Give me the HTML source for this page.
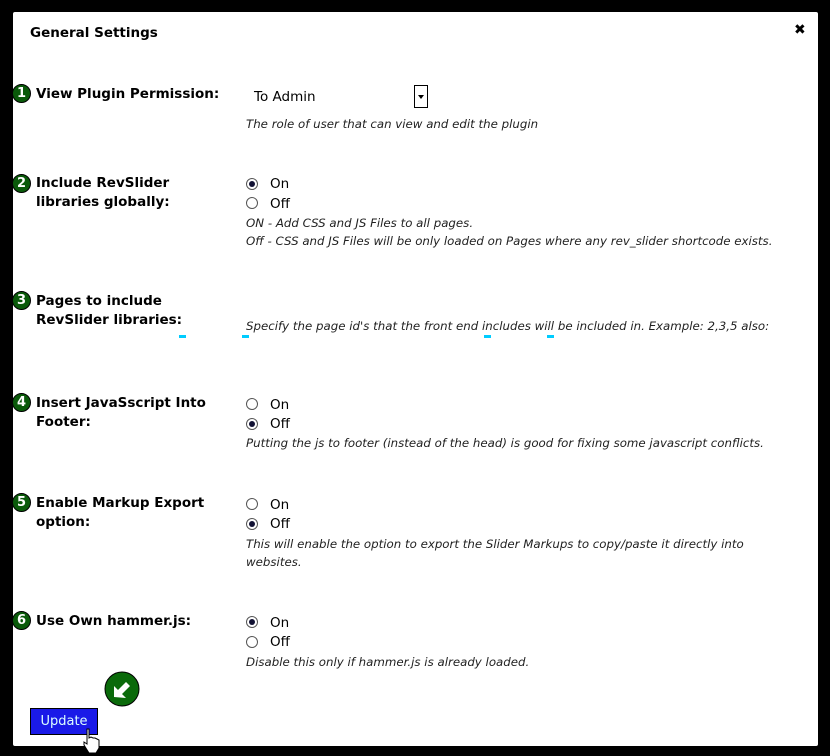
<!DOCTYPE html>
<html><head><style>
body{margin:0;width:830px;height:756px;background:#000;position:relative;overflow:hidden;font-family:"DejaVu Sans","Liberation Sans",sans-serif;}
.panel{position:absolute;left:13px;top:12px;width:805px;height:734px;background:#fff;border-radius:2px;}
.a{position:absolute;white-space:nowrap;}
.lbl{font-weight:bold;font-size:13.5px;color:#000;line-height:19px;}
.num{position:absolute;width:17px;height:17px;border-radius:50%;background:#0a5a0a;border:1px solid #000;color:#fff;font-weight:bold;font-size:13px;line-height:17px;text-align:center;}
.d{font-style:italic;font-size:11.8px;color:#222;line-height:18px;}
.r{font-size:13.5px;}
.rb{position:absolute;width:10px;height:10px;border:1px solid #555;border-radius:50%;background:#fff;}
.rb.on::after{content:"";position:absolute;left:2px;top:2px;width:6px;height:6px;border-radius:50%;background:#113;}
</style></head><body>
<div class="panel"></div>
<div class="a lbl" style="left:30px;top:24px;">General Settings</div>
<div class="a" style="left:794px;top:22px;font-weight:bold;font-size:14px;">✖</div>

<div class="num" style="left:12px;top:84px;">1</div>
<div class="a lbl" style="left:36px;top:85px;">View Plugin Permission:</div>
<div class="a r" style="left:254px;top:89px;">To Admin</div>
<div class="a" style="left:414px;top:85px;width:14px;height:23px;border:1px solid #000;box-sizing:border-box;"><div style="position:absolute;left:3px;top:9px;border:3px solid transparent;border-top:4px solid #000;"></div></div>
<div class="a d" style="left:246px;top:115px;">The role of user that can view and edit the plugin</div>

<div class="num" style="left:12px;top:174px;">2</div>
<div class="a lbl" style="left:36px;top:174px;">Include RevSlider<br>libraries globally:</div>
<div class="rb on" style="left:246px;top:178px;"></div><div class="a r" style="left:270px;top:176px;">On</div>
<div class="rb" style="left:246px;top:197px;"></div><div class="a r" style="left:270px;top:196px;">Off</div>
<div class="a d" style="left:246px;top:214px;">ON - Add CSS and JS Files to all pages.<br>Off - CSS and JS Files will be only loaded on Pages where any rev_slider shortcode exists.</div>

<div class="num" style="left:12px;top:291px;">3</div>
<div class="a lbl" style="left:36px;top:292px;">Pages to include<br>RevSlider libraries:</div>
<div class="a d" style="left:246px;top:317px;">Specify the page id's that the front end includes will be included in. Example: 2,3,5 also: </div>
<div class="a" style="left:179px;top:335px;width:7px;height:3px;background:#0cf;"></div>
<div class="a" style="left:242px;top:335px;width:7px;height:3px;background:#0cf;"></div>
<div class="a" style="left:484px;top:335px;width:7px;height:3px;background:#0cf;"></div>
<div class="a" style="left:547px;top:335px;width:7px;height:3px;background:#0cf;"></div>

<div class="num" style="left:12px;top:393px;">4</div>
<div class="a lbl" style="left:36px;top:394px;">Insert JavaSscript Into<br>Footer:</div>
<div class="rb" style="left:246px;top:398px;"></div><div class="a r" style="left:270px;top:397px;">On</div>
<div class="rb on" style="left:246px;top:418px;"></div><div class="a r" style="left:270px;top:416px;">Off</div>
<div class="a d" style="left:246px;top:434px;">Putting the js to footer (instead of the head) is good for fixing some javascript conflicts.</div>

<div class="num" style="left:12px;top:493px;">5</div>
<div class="a lbl" style="left:36px;top:494px;">Enable Markup Export<br>option:</div>
<div class="rb" style="left:246px;top:498px;"></div><div class="a r" style="left:270px;top:497px;">On</div>
<div class="rb on" style="left:246px;top:518px;"></div><div class="a r" style="left:270px;top:516px;">Off</div>
<div class="a d" style="left:246px;top:535px;">This will enable the option to export the Slider Markups to copy/paste it directly into<br>websites.</div>

<div class="num" style="left:12px;top:611px;">6</div>
<div class="a lbl" style="left:36px;top:612px;">Use Own hammer.js:</div>
<div class="rb on" style="left:246px;top:616px;"></div><div class="a r" style="left:270px;top:615px;">On</div>
<div class="rb" style="left:246px;top:636px;"></div><div class="a r" style="left:270px;top:634px;">Off</div>
<div class="a d" style="left:246px;top:653px;">Disable this only if hammer.js is already loaded.</div>

<svg class="a" style="left:104px;top:671px;" width="36" height="36" viewBox="0 0 36 36"><circle cx="18" cy="18" r="17" fill="#0a6a0a" stroke="#000" stroke-width="1"/><path d="M10 26 L10 15 L14 19 L22 11 L26 15 L18 23 L22 27 Z" fill="#fff"/></svg>
<div class="a" style="left:30px;top:708px;width:68px;height:27px;background:#1a1ae8;border:1px solid #000;box-sizing:border-box;color:#dff;font-size:13px;line-height:25px;text-align:center;">Update</div>
<svg class="a" style="left:82px;top:728px;" width="20" height="26" viewBox="0 0 20 26"><path d="M5 1 L7 1 L7 10 L9 9 L11 10 L13 10 L15 11 L17 12 L17 20 L14 25 L7 25 L2 17 L2 14 L5 16 Z" fill="#fff" stroke="#000" stroke-width="1"/></svg>
</body></html>
